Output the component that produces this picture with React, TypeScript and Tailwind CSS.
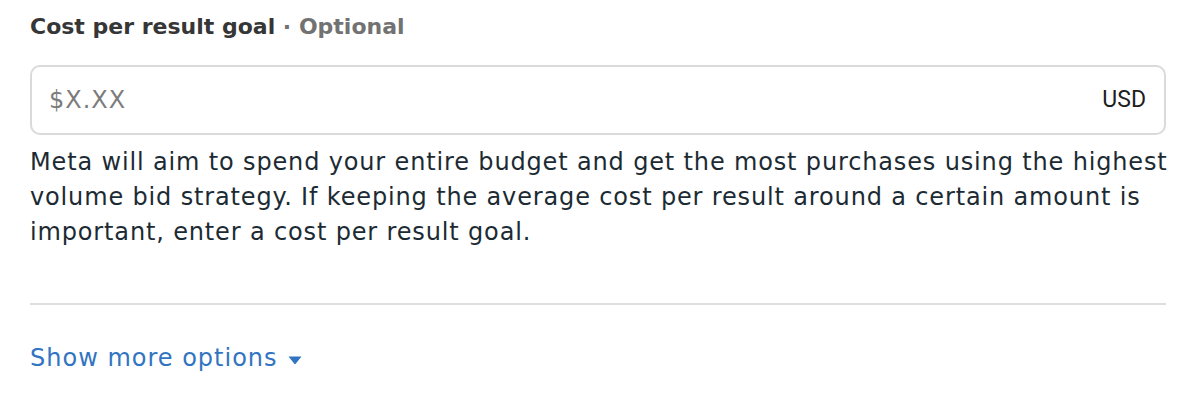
import React from "react";

const helpLines = [
  "Meta will aim to spend your entire budget and get the most purchases using the highest",
  "volume bid strategy. If keeping the average cost per result around a certain amount is",
  "important, enter a cost per result goal.",
];

const App: React.FC = () => {
  return (
    <div className="w-[1196px] h-[402px] bg-white px-[30px] pt-[12px] font-['DejaVu_Sans',sans-serif]">
      {/* Label */}
      <div className="text-[22px] leading-[30px] font-bold text-[#363636] whitespace-nowrap">
        Cost per result goal
        <span className="text-[#727272]"> · Optional</span>
      </div>

      {/* Input */}
      <div className="mt-[23px] flex items-center justify-between h-[70px] w-[1136px] border-2 border-[#d9dadc] rounded-[10px] pl-[17px] pr-[18px]">
        <span className="text-[24px] tracking-[1px] text-[#7c7c7c]">$X.XX</span>
        <span className="font-['Roboto',sans-serif] text-[23px] text-[#1c1e21]">USD</span>
      </div>

      {/* Help text */}
      <p className="mt-[10px] text-[24px] leading-[35px] tracking-[0.85px] text-[#1c2b33] whitespace-nowrap">
        {helpLines.map((l) => (
          <span key={l} className="block">
            {l}
          </span>
        ))}
      </p>

      <div className="mt-[53px] h-[2px] w-[1136px] bg-[#dcdee1]" />

      <button className="mt-[38px] flex items-center gap-[10px] text-[24px] leading-[30px] tracking-[1px] text-[#3174c2]">
        Show more options
        <svg width="14" height="9" viewBox="0 0 14 9" className="mt-[4px]">
          <path d="M0.5 0.5h13l-5.8 7.2a0.9 0.9 0 0 1-1.4 0z" fill="currentColor" />
        </svg>
      </button>
    </div>
  );
};

export default App;
